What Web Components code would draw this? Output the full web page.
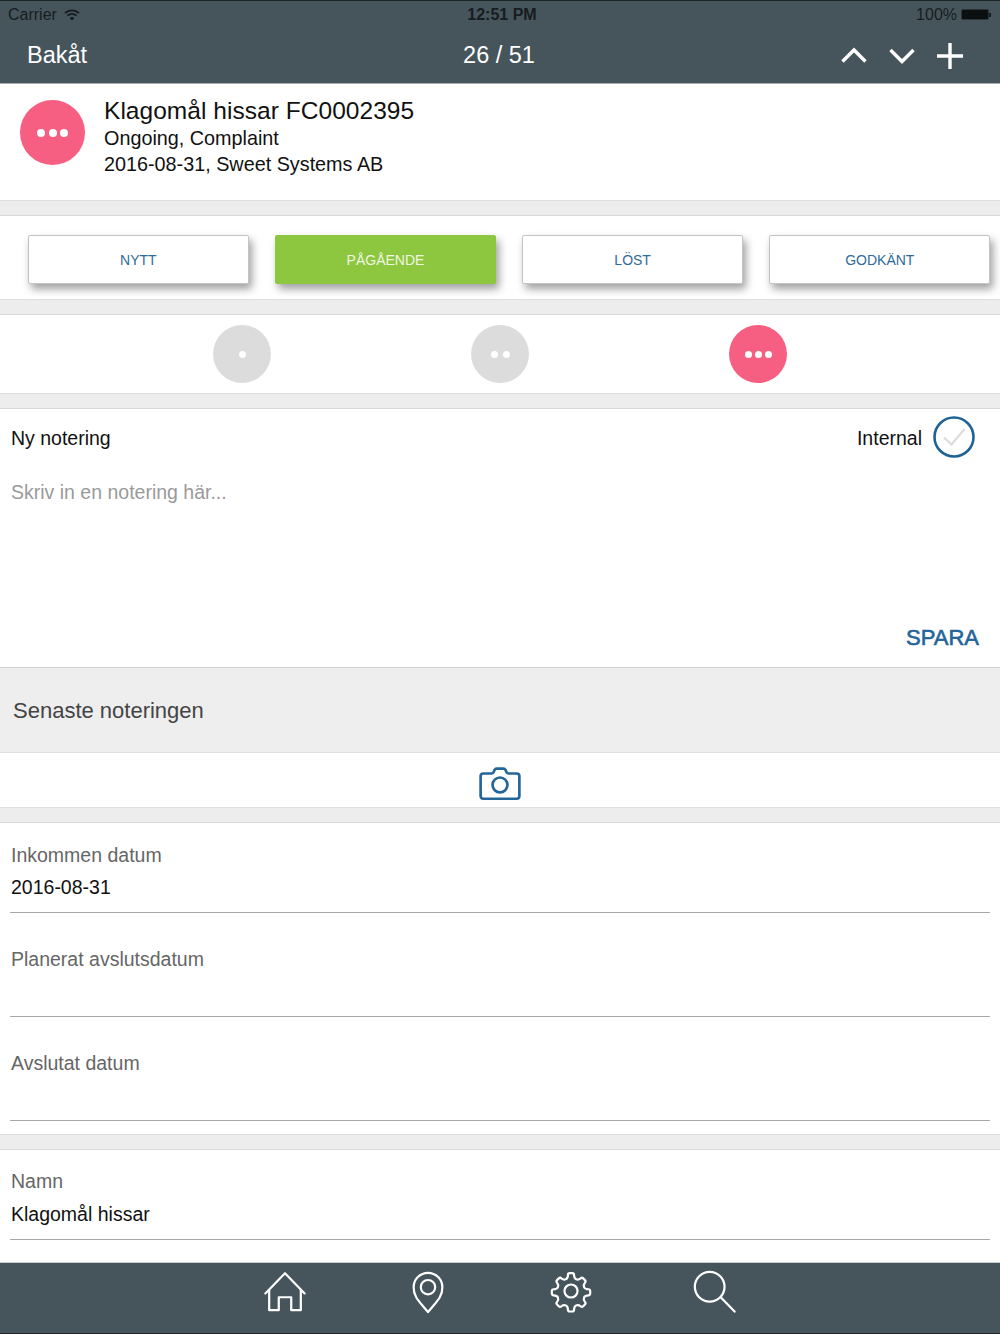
<!DOCTYPE html>
<html lang="sv">
<head>
<meta charset="utf-8">
<title>Klagomål hissar</title>
<style>
  html, body { margin: 0; padding: 0; background: #fff; }
  body { width: 1000px; height: 1334px; overflow: hidden; display: flex; flex-direction: column; font-family: "Liberation Sans", Arial, sans-serif; color: #111; }
  .scroll { flex: 1; min-height: 0; overflow: hidden; }
</style>
</head>
<body>
  <top-bar position="26 / 51" back="Bakåt"></top-bar>
  <div class="scroll">
    <case-header title="Klagomål hissar FC0002395" line1="Ongoing, Complaint" line2="2016-08-31, Sweet Systems AB"></case-header>
    <gap-bar></gap-bar>
    <state-buttons></state-buttons>
    <gap-bar></gap-bar>
    <level-dots></level-dots>
    <gap-bar></gap-bar>
    <note-form></note-form>
    <section-title>Senaste noteringen</section-title>
    <camera-row></camera-row>
    <gap-bar></gap-bar>
    <form-field label="Inkommen datum" value="2016-08-31"></form-field>
    <form-field label="Planerat avslutsdatum"></form-field>
    <form-field label="Avslutat datum"></form-field>
    <gap-bar style="margin-top:-1px"></gap-bar>
    <form-field label="Namn" value="Klagomål hissar" compact></form-field>
  </div>
  <tab-bar></tab-bar>

<script>
  // small helper, every element gets an open shadow root with its own styles
  const define = (name, render) => {
    customElements.define(name, class extends HTMLElement {
      connectedCallback() {
        if (this.shadowRoot) return;
        this.attachShadow({ mode: 'open' }).innerHTML = render(this);
      }
    });
  };

  define('top-bar', el => `
    <style>
      :host { display: block; height: 84px; box-sizing: border-box; background: #46555c; border-top: 1px solid #1d2528; border-bottom: 1px solid #a9adaf; flex: none; }
      .status { height: 27px; display: grid; grid-template-columns: 1fr auto 1fr; align-items: center; padding: 0 9px 0 8px; font-size: 16px; color: #161c1f; }
      .left { display: flex; align-items: center; gap: 7px; }
      .right { display: flex; align-items: center; justify-content: flex-end; gap: 4px; }
      .time { font-weight: 700; padding-left: 5px; }
      .battery { display: flex; align-items: center; }
      .battery i { display: block; width: 28px; height: 11px; background: #0c0f10; border: 1px solid #2b3438; border-radius: 2px; box-sizing: border-box; }
      .battery b { display: block; width: 2px; height: 4px; background: #161c1f; }
      .nav { height: 55px; display: grid; grid-template-columns: 1fr auto 1fr; align-items: center; padding: 0 35px 0 27px; color: #fff; font-size: 23.500px; }
      .count { position: relative; left: 3px; }
      .tools { display: flex; justify-content: flex-end; gap: 18px; }
      .tools svg { display: block; width: 30px; height: 30px; fill: none; stroke: #fff; stroke-width: 3.400; }
    </style>
    <div class="status">
      <div class="left"><span>Carrier</span>
        <svg width="16" height="12" viewBox="0 0 16 12" fill="none" stroke="#161c1f" stroke-width="1.800"><path d="M1 4.200a10 10 0 0 1 14 0"/><path d="M3.400 6.700a6.600 6.600 0 0 1 9.200 0"/><path d="M8 11.500 5.600 9.100a3.400 3.400 0 0 1 4.800 0z" fill="#161c1f" stroke="none"/></svg>
      </div>
      <div class="time">12:51 PM</div>
      <div class="right"><span>100%</span><span class="battery"><i></i><b></b></span></div>
    </div>
    <div class="nav">
      <div>${el.getAttribute('back')}</div>
      <div class="count">${el.getAttribute('position')}</div>
      <div class="tools">
        <svg viewBox="0 0 30 30"><path d="M3.500 20.500 15 9 26.500 20.500"/></svg>
        <svg viewBox="0 0 30 30"><path d="M3.500 9 15 20.500 26.500 9"/></svg>
        <svg viewBox="0 0 30 30"><path d="M15 2v26M2 15h26"/></svg>
      </div>
    </div>`);

  define('dot-badge', el => {
    const n = +el.getAttribute('dots');
    return `
    <style>
      :host { display: flex; align-items: center; justify-content: center; width: var(--size, 58px); height: var(--size, 58px); border-radius: 50%; background: var(--bg, #dcdcdc); flex: none; gap: var(--dot-gap, 3px); }
      i { display: block; width: var(--dot, 8px); height: var(--dot, 8px); border-radius: 50%; background: #fff; }
    </style>${'<i></i>'.repeat(n)}`;
  });

  define('case-header', el => `
    <style>
      :host { display: flex; height: 116px; box-sizing: border-box; padding: 16px 0 0 20px; gap: 19px; background: #fff; }
      dot-badge { --size: 65px; --bg: #f65f82; --dot: 8px; --dot-gap: 3.500px; }
      .text { color: #111; position: relative; top: -4px; }
      h1 { margin: 0; font-size: 24.500px; font-weight: 400; line-height: 30px; letter-spacing: .04px; }
      p { margin: 0; font-size: 19.800px; line-height: 26px; position: relative; top: -1px; }
    </style>
    <dot-badge dots="3"></dot-badge>
    <div class="text">
      <h1>${el.getAttribute('title')}</h1>
      <p>${el.getAttribute('line1')}</p>
      <p>${el.getAttribute('line2')}</p>
    </div>`);

  define('gap-bar', () => `
    <style>
      :host { display: block; height: 16px; box-sizing: border-box; background: #ededed; border-top: 1px solid #dedede; border-bottom: 1px solid #d9d9d9; position: relative; }
    </style>`);

  define('state-button', el => `
    <style>
      :host { display: flex; align-items: center; justify-content: center; height: 49px; box-sizing: border-box; background: #fff; color: #2f6b9a; border: 1px solid #c4c4c4; border-radius: 2px; font-size: 14px; box-shadow: 3px 5px 9px rgba(0,0,0,.38); }
      :host([active]) { background: #8dc63f; border-color: #8dc63f; color: #eef7e0; }
    </style><slot></slot>`);

  define('state-buttons', () => `
    <style>
      :host { display: grid; grid-template-columns: repeat(4, 220.750px); column-gap: 26.400px; height: 83px; box-sizing: border-box; padding: 19px 0 0 28px; background: #fff; }
    </style>
    <state-button>NYTT</state-button>
    <state-button active>PÅGÅENDE</state-button>
    <state-button>LÖST</state-button>
    <state-button>GODKÄNT</state-button>`);

  define('level-dots', () => `
    <style>
      :host { display: grid; grid-template-columns: repeat(3, 58px); column-gap: 200px; justify-content: center; align-items: center; height: 78px; background: #fff; }
      .on { --bg: #f65f82; --dot-gap: 3px; }
      dot-badge { --dot: 7px; --dot-gap: 5px; }
    </style>
    <dot-badge dots="1"></dot-badge>
    <dot-badge dots="2"></dot-badge>
    <dot-badge dots="3" class="on"></dot-badge>`);

  define('note-form', () => `
    <style>
      :host { display: flex; flex-direction: column; height: 258px; box-sizing: border-box; padding: 8px 21px 16px 11px; background: #fff; font-size: 19.500px; }
      .head { display: flex; align-items: center; justify-content: space-between; height: 42px; padding-right: 4px; }
      .internal { display: flex; align-items: center; gap: 11px; }
      .internal svg { margin-bottom: 2px; }
      .hint { color: #9a9a9a; margin-top: 22px; flex: 1; }
      .save { align-self: flex-end; color: #24659a; font-size: 22px; -webkit-text-stroke: .6px #24659a; }
      svg { display: block; }
    </style>
    <div class="head">
      <div>Ny notering</div>
      <div class="internal"><span>Internal</span>
        <svg width="42" height="42" viewBox="0 0 42 42" fill="none"><circle cx="21" cy="21" r="19.500" stroke="#1f6396" stroke-width="2.600"/><path d="m11 21.500 7.500 7L31.500 13" stroke="#dcdcdc" stroke-width="2.200"/></svg>
      </div>
    </div>
    <div class="hint">Skriv in en notering här...</div>
    <div class="save">SPARA</div>`);

  define('section-title', () => `
    <style>
      :host { display: flex; align-items: center; height: 86px; box-sizing: border-box; padding: 2px 13px 0; background: #eeeeee; border-top: 1px solid #d2d2d2; border-bottom: 1px solid #dedede; color: #444; font-size: 22px; }
    </style><slot></slot>`);

  define('camera-row', () => `
    <style>
      :host { display: flex; justify-content: center; height: 54px; box-sizing: border-box; padding-top: 13px; background: #fff; }
      svg { display: block; }
    </style>
    <svg width="42" height="35" viewBox="0 0 44 36" fill="none" stroke="#24659a" stroke-width="2.800" stroke-linejoin="round">
      <path d="M4.500 7.500h8.500c1.200 0 1.800-.5 2.300-1.400l.9-2.100c.5-1 1.200-1.500 2.300-1.500h7c1.100 0 1.900.5 2.400 1.500l.9 2.100c.5.900 1.100 1.400 2.300 1.400h8.400c1.700 0 2.800 1.100 2.800 2.800v20.900c0 1.700-1.100 2.800-2.800 2.800H4.500c-1.700 0-2.800-1.100-2.800-2.800V10.300c0-1.700 1.100-2.800 2.800-2.800z"/>
      <circle cx="22" cy="19.500" r="7.800"/>
    </svg>`);

  define('form-field', el => `
    <style>
      :host { display: block; height: 104px; box-sizing: border-box; padding: 21px 10px 0 10px; background: #fff; font-size: 19.500px; --value-h: 46px; --value-lh: 41px; }
      :host([compact]) { height: 113px; padding-top: 20px; --value-h: 47px; --value-lh: 43px; }
      .label { color: #666; line-height: 23px; padding-left: 1px; }
      .value { color: #111; height: var(--value-h); line-height: var(--value-lh); box-sizing: border-box; border-bottom: 1px solid #aaa; padding-left: 1px; }
    </style>
    <div class="label">${el.getAttribute('label')}</div>
    <div class="value">${el.getAttribute('value') || ''}</div>`);

  define('tab-bar', () => `
    <style>
      :host { display: flex; justify-content: center; height: 72px; box-sizing: border-box; background: #46555c; border-top: 1px solid #c9cfd1; border-bottom: 1px solid #1d2528; flex: none; padding-right: 1px; }
      .tab { width: 143px; display: flex; justify-content: center; padding-top: 5px; }
      svg { display: block; width: 46px; height: 46px; fill: none; stroke: #fff; stroke-width: 2.300; stroke-linejoin: round; stroke-linecap: round; }
      .gear { stroke-width: 2.500; }
    </style>
    <div class="tab"><svg viewBox="0 0 48 48"><path d="M3.500 26.500 24 5.500l20.500 21"/><path d="M7.500 23v21h10V30.500h13V44h10V23"/></svg></div>
    <div class="tab"><svg viewBox="0 0 48 48"><path d="M24 46C14 34 9 30 9 20a15 15 0 0 1 30 0c0 10-5 14-15 26z"/><circle cx="24" cy="20" r="7.500"/></svg></div>
    <div class="tab"><svg class="gear" viewBox="-2.400 -2.400 52.800 52.800"><path d="M20.500 5.500c0-1.300 1-2 2-2h3c1 0 2 .7 2 2 0 3 .5 4 2.500 5 2 .9 3.200.5 5-1 1-.9 2.200-.8 3 0l2 2c.8.800.9 2 0 3-1.500 1.800-1.900 3-1 5 .8 1.800 2 2.500 5 2.500 1.300 0 2 1 2 2v3c0 1-.7 2-2 2-3 0-4.200.7-5 2.500-.9 2-.5 3.200 1 5 .9 1 .8 2.200 0 3l-2 2c-.8.800-2 .9-3 0-1.800-1.500-3-1.900-5-1-2 1-2.500 2-2.500 5 0 1.300-1 2-2 2h-3c-1 0-2-.7-2-2 0-3-.5-4-2.500-5-2-.9-3.200-.5-5 1-1 .9-2.200.8-3 0l-2-2c-.8-.8-.9-2 0-3 1.500-1.800 1.900-3 1-5-.8-1.800-2-2.500-5-2.500-1.300 0-2-1-2-2v-3c0-1 .7-2 2-2 3 0 4.200-.7 5-2.500.9-2 .5-3.200-1-5-.9-1-.8-2.200 0-3l2-2c.8-.8 2-.9 3 0 1.800 1.500 3 1.900 5 1 2-1 2.500-2 2.500-5z"/><circle cx="24" cy="24" r="7.500"/></svg></div>
    <div class="tab"><svg viewBox="0 0 48 48"><circle cx="19.500" cy="19.500" r="15.500"/><path d="m31 30.500 14.500 15"/></svg></div>`);
</script>
</body>
</html>
